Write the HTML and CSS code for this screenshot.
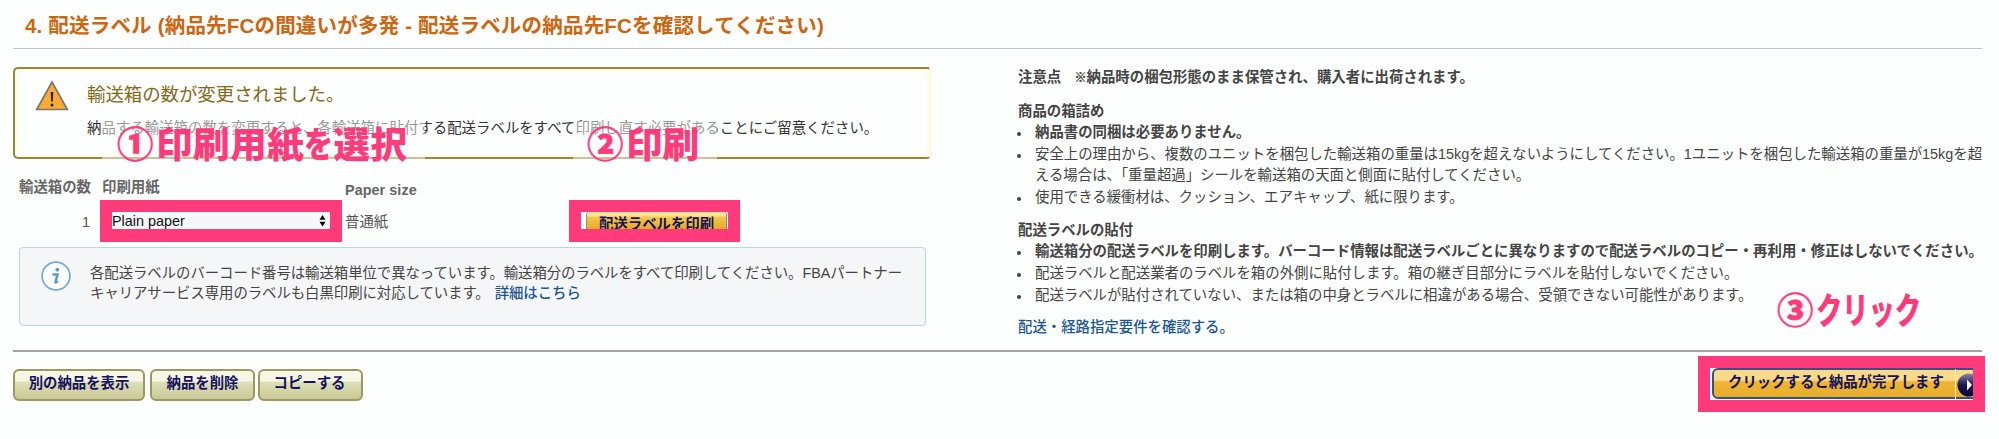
FILE: index.html
```html
<!DOCTYPE html>
<html lang="ja">
<head>
<meta charset="utf-8">
<title>配送ラベル</title>
<link rel="stylesheet" href="styles.css">
</head>
<body>
<main class="page">
  <h1 class="title">4. 配送ラベル (納品先FCの間違いが多発 - 配送ラベルの納品先FCを確認してください)</h1>
  <div class="columns">
    <section class="left">
      <div class="alert">
        <svg class="alert-icon" viewBox="0 0 34 31"><path d="M17 2 L32.300 29.500 H1.700 Z" fill="#fbaa33" stroke="#777" stroke-width="1.700"/><path d="M15.700 12 h2.600 l-.5 9.500 h-1.600z" fill="#222"/><circle cx="17" cy="25" r="1.500" fill="#222"/></svg>
        <div>
          <h2 class="alert-title">輸送箱の数が変更されました。</h2>
          <p class="alert-text">納品する輸送箱の数を変更すると、各輸送箱に貼付する配送ラベルをすべて印刷し直す必要があることにご留意ください。</p>
        </div>
      </div>
      <div class="table">
        <div class="count head">輸送箱の数</div><div class="head">印刷用紙</div><div class="head latin">Paper size</div><div></div>
        <div class="count">1</div>
        <div class="mark mark-select"><div class="select"><span>Plain paper</span><svg class="arrows" viewBox="0 0 8 14"><path d="M4 0 L7.500 5.500 H.5Z M.5 8 H7.500 L4 13.500Z"/></svg></div></div>
        <div class="size">普通紙</div>
        <div class="mark mark-print"><div class="clip"><div class="print">配送ラベルを印刷</div></div></div>
      </div>
      <div class="info">
        <svg class="info-icon" viewBox="0 0 30 30"><circle cx="15" cy="15" r="13.900" fill="#fff" stroke="#73aad6" stroke-width="1.700"/><circle cx="16.300" cy="8.700" r="1.900" fill="#5c9acb"/><path d="M11.500 13.500 h5 l-2 7.500 q0 1 2.300-.6" fill="none" stroke="#5c9acb" stroke-width="2.500"/></svg>
        <p>各配送ラベルのバーコード番号は輸送箱単位で異なっています。輸送箱分のラベルをすべて印刷してください。FBAパートナー<br>キャリアサービス専用のラベルも白黒印刷に対応しています。<a>詳細はこちら</a></p>
      </div>
    </section>
    <section class="notes">
      <h3>注意点　<span class="kome">※</span>納品時の梱包形態のまま保管され、購入者に出荷されます。</h3>
      <h3>商品の箱詰め</h3>
      <ul>
        <li class="strong">納品書の同梱は必要ありません。</li>
        <li>安全上の理由から、複数のユニットを梱包した輸送箱の重量は15kgを超えないようにしてください。1ユニットを梱包した輸送箱の重量が15kgを超<br>える場合は、「重量超過」シールを輸送箱の天面と側面に貼付してください。</li>
        <li>使用できる緩衝材は、クッション、エアキャップ、紙に限ります。</li>
      </ul>
      <h3>配送ラベルの貼付</h3>
      <ul>
        <li class="strong">輸送箱分の配送ラベルを印刷します。バーコード情報は配送ラベルごとに異なりますので配送ラベルのコピー・再利用・修正はしないでください。</li>
        <li>配送ラベルと配送業者のラベルを箱の外側に貼付します。箱の継ぎ目部分にラベルを貼付しないでください。</li>
        <li>配送ラベルが貼付されていない、または箱の中身とラベルに相違がある場合、受領できない可能性があります。</li>
      </ul>
      <a>配送・経路指定要件を確認する。</a>
    </section>
  </div>
  <footer class="actions">
    <div class="btn btn-wide">別の納品を表示</div>
    <div class="btn">納品を削除</div>
    <div class="btn btn-last">コピーする</div>
    <div class="mark mark-finish"><div class="finish-clip"><div class="finish"><span class="finish-text">クリックすると納品が完了します</span><svg class="go" viewBox="0 0 24 24"><defs><linearGradient id="g" x2="0" y2="1"><stop offset="0" stop-color="#8589a8"/><stop offset=".5" stop-color="#16164f"/><stop offset="1" stop-color="#07073c"/></linearGradient></defs><circle cx="12" cy="12" r="11.500" fill="url(#g)"/><path d="M10 6.500 L15 12 L10 17.500Z" fill="#fff"/></svg></div></div></div>
  </footer>
  <div class="callout callout-1"><span class="num">①</span><span>印刷用紙</span><span class="wo">を</span><span>選択</span></div>
  <div class="callout callout-2"><span class="num">②</span>印刷</div>
  <div class="callout callout-3"><span class="num">③</span><span class="kana">クリック</span></div>
</main>
</body>
</html>
```
FILE: styles.css
```css
* { box-sizing: border-box; }
body {
  margin: 0;
  background: #fdfefe;
  color: #444;
  font: 14.4px/21.6px "Liberation Sans", "Noto Sans CJK JP", sans-serif;
  white-space: nowrap;
}
h1, h2, h3, p, ul { margin: 0; padding: 0; }
a { color: #1d5593; font-weight: 500; }
.page { position: relative; width: 1999px; height: 439px; overflow: hidden; padding: 0 17px 0 13px; }
.title { height: 49px; border-bottom: 1px solid #c4c4c4; padding: 10px 0 0 12px; font-size: 20.5px; letter-spacing: .19px; line-height: 32px; color: #cb6611; }
.columns { display: flex; height: 303px; border-bottom: 2px solid #a3a3a3; }
.left { width: 918px; margin-top: 18px; }
.alert {
  display: flex; width: 919px; height: 92px; padding: 13px 0 0 22px; gap: 18px;
  border: 2px solid #9a8637; border-right: 3px solid #fff9e2; border-radius: 5px;
  background: #fdfefe; box-shadow: inset 0 0 3px 2px #fffbe3; color: #333;
}
.alert-icon { width: 34px; height: 31px; flex: none; margin-top: -2px; margin-left: -2px; }
.alert-title { font-size: 18.400px; font-weight: 400; line-height: 26px; color: #806a1c; }
.alert-text { margin-top: 9px; line-height: 22px; letter-spacing: .04px; }
.table { display: grid; grid-template-columns: 87px 244px 225px 1fr; grid-template-rows: 41px 47px; }
.head { font-weight: 700; color: #666; padding: 18px 0 0 2px; }
.count { text-align: right; padding-right: 10px; }
.count.head { padding-right: 9px; }
.head.latin { padding: 21px 0 0 1px; letter-spacing: .05px; }
.count:not(.head), .size { padding-top: 12px; color: #555; }
.size { padding-left: 1px; }
.mark { border: 12px solid #ff3b7b; border-bottom-width: 13px; height: 42px; }
.mark-select { width: 242px; }
.select { display: flex; align-items: center; justify-content: space-between; height: 17px; background: #f6f7f8; color: #111; padding-right: 4px; line-height: 19px; }
.select span { padding-top: 2px; }
.arrows { width: 7px; height: 12px; }
.mark-print { width: 171px; }
.clip { height: 17px; overflow: hidden; background: #fff; padding-left: 5px; }
.print { height: 30px; width: 141px; padding-left: 12px; border: solid #8a9097; border-width: 0 1px; background: linear-gradient(#ffe19a 0 4px, #f7c74c 5px, #e7a925 17px); color: #14125f; font-weight: 700; line-height: 25px; border-radius: 3px; }
.info { display: flex; height: 79px; width: 907px; margin-left: 6px; padding: 15px 0 0 22px; gap: 19px; border: 1px solid #b9d6e5; border-radius: 4px; background: #f5f6f8; line-height: 20.400px; letter-spacing: -.05px; }
.info-icon { width: 30px; height: 30px; flex: none; margin-top: -2px; margin-left: -1px; }
.info a { margin-left: 5px; }
.notes { margin-left: 87px; padding-top: 17px; }
.notes h3 { font-size: 14.400px; line-height: 22px; margin-bottom: 11px; }
.notes h3:not(:first-child) { margin-bottom: 0; }
.notes ul { list-style: none; margin-bottom: 11px; }
.notes li { position: relative; padding-left: 17px; }
.notes li::before { content: ""; position: absolute; left: -1px; top: 10px; width: 4px; height: 4px; border-radius: 50%; background: #444; }
.strong { font-weight: 700; }
.kome { display: inline-block; width: 12px; margin-left: -1px; font-size: 12px; -webkit-text-stroke: .4px #444; }
.actions { display: flex; padding-top: 4px; }
.btn { width: 105px; height: 32px; margin: 13px 3px 0 0; text-align: center; color: #14125f; font-weight: 700; line-height: 24px; border: 2px solid #9c9863; border-radius: 6px; background: linear-gradient(#f6f6e5 0 10px, #dfdfb9 11px, #c9c995); }
.btn-wide { width: 132px; margin-right: 5px; }
.btn-last { padding-right: 2px; }
.mark-finish { width: 287px; height: 56px; border-width: 12px; margin-left: auto; margin-right: -3px; }
.finish-clip { overflow: hidden; height: 32px; background: #fff; padding-left: 2px; }
.finish { display: flex; align-items: center; width: 280px; height: 31px; border: 2px solid #31537e; border-radius: 6px; background: linear-gradient(#fbd88a 0 10px, #efb431 12px, #e6ae2c); color: #14125f; font-weight: 700; }
.finish-text { width: 242px; height: 30px; line-height: 26px; padding-left: 14px; border-right: 1px solid #fff3c6; }
.go { width: 24px; height: 24px; flex: none; margin: 3px 0 0 1px; }
.callout { position: absolute; display: flex; align-items: center; height: 43px; font: 900 36.500px/43px "Noto Sans CJK JP", sans-serif; color: #ff3b7b; background: rgba(253, 254, 254, .5); }
.callout-1 { left: 102px; top: 121px; width: 323px; padding-left: 15px; letter-spacing: .6px; }
.callout-2 { left: 573px; top: 121px; width: 144px; padding-left: 14px; }
.callout-3 { left: 1777px; top: 287px; background: none; }
.num { width: 39px; -webkit-text-stroke: .5px #ff3b7b; }
.wo { width: 29px; transform: scaleX(.8); transform-origin: left; }
.kana { display: inline-block; transform: scaleX(.72); transform-origin: left; }
```
